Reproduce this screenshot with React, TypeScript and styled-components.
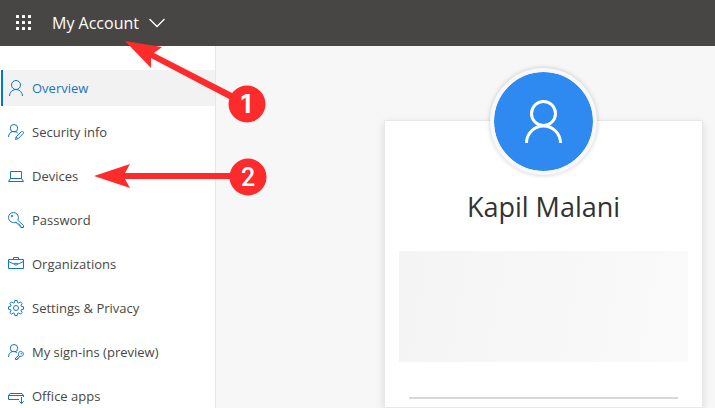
import React from "react";
import styled, { createGlobalStyle } from "styled-components";

const GlobalStyle = createGlobalStyle`
  * { box-sizing: border-box; }
  body {
    margin: 0;
    font-family: "Segoe UI", "Open Sans", "Noto Sans", sans-serif;
    color: #323130;
    background: #f7f7f7;
  }
`;

const Shell = styled.div`
  position: relative;
  display: flex;
  flex-direction: column;
  height: 100vh;
  overflow: hidden;
`;

const TopBar = styled.header`
  display: flex;
  flex: none;
  align-items: center;
  height: 46px;
  padding-left: 15px;
  gap: 20px;
  background: #484644;
`;

const BarButton = styled.button`
  display: flex;
  align-items: center;
  gap: 10px;
  padding: 0;
  border: 0;
  background: none;
  color: #fff;
  font-family: inherit;
  font-size: 16px;
  line-height: 24px;
  cursor: pointer;
`;

const Body = styled.div`
  display: flex;
  flex: 1;
  min-height: 0;
`;

const Sidebar = styled.nav`
  flex: none;
  width: 216px;
  padding-top: 24px;
  border-right: 1px solid #e6e6e6;
  background: #fff;
  overflow: hidden;
`;

const NavList = styled.ul`
  display: flex;
  flex-direction: column;
  gap: 8px;
  margin: 0;
  padding: 0 0 0 1px;
  list-style: none;
`;

const NavLink = styled.a<{ $active?: boolean }>`
  display: flex;
  align-items: center;
  gap: 8px;
  height: 36px;
  padding-left: 5px;
  border-left: 2px solid ${(p) => (p.$active ? "#0078d4" : "transparent")};
  background: ${(p) => (p.$active ? "#f3f2f2" : "transparent")};
  color: ${(p) => (p.$active ? "#1a75c0" : "#484746")};
  font-size: 13px;
  line-height: 20px;
  text-decoration: none;
  white-space: nowrap;
`;

const NavIcon = styled.svg`
  flex: none;
  width: 16px;
  height: 16px;
  fill: none;
  stroke: #1673c4;
`;

const Main = styled.main`
  flex: 1;
  min-width: 0;
  padding: 74px 12px 0 168px;
  background: #f7f7f7;
`;

const Card = styled.section`
  display: flex;
  flex-direction: column;
  align-items: center;
  height: 100%;
  padding: 0 14px;
  border: 1px solid #e8e8e8;
  background: #fff;
  box-shadow: 0 3px 8px rgba(0, 0, 0, 0.12);
`;

const Avatar = styled.div`
  display: flex;
  flex: none;
  align-items: center;
  justify-content: center;
  width: 107px;
  height: 107px;
  margin-top: -53px;
  border: 4px solid #f9f8f8;
  border-radius: 50%;
  background: #2e8af1;
  background-clip: padding-box;
  box-shadow: 0 0 5px rgba(0, 0, 0, 0.2);
`;

const Name = styled.h1`
  margin: 14px 0 0;
  font-size: 27px;
  font-weight: 400;
  line-height: 36px;
  white-space: nowrap;
`;

const Details = styled.div`
  flex: none;
  width: 100%;
  height: 111px;
  margin-top: 26px;
  background: linear-gradient(100deg, #f4f4f4, #f7f7f7 50%, #fafafa);
`;

const Divider = styled.hr`
  flex: none;
  align-self: stretch;
  height: 2px;
  margin: 35px 10px 0;
  border: 0;
  background: #d8d8d8;
`;

const Callouts = styled.svg`
  position: absolute;
  top: 0;
  left: 0;
  width: 280px;
  height: 200px;
  pointer-events: none;
  fill: #fd2b2b;
`;

const CalloutNumber = styled.text<{ $bold?: boolean }>`
  fill: #fff;
  font-family: ${(p) => (p.$bold ? "Inter" : "Roboto")}, sans-serif;
  font-size: 25px;
  font-weight: ${(p) => (p.$bold ? 700 : 500)};
  text-anchor: middle;
`;

const items: { label: string; active?: boolean; icon: React.ReactNode }[] = [
  {
    label: "Overview",
    active: true,
    icon: (
      <>
        <circle cx="8" cy="5" r="4.5" />
        <path d="M1.5 16 A6.5 6.5 0 0 1 14.5 16" />
      </>
    ),
  },
  {
    label: "Security info",
    icon: (
      <>
        <circle cx="6" cy="4.2" r="3.7" />
        <path d="M.5 13 C.8 6.5 7.5 6.5 9.8 9.2" />
        <path d="M7.5 15.5 L8.2 12.8 L13.4 7.6 Q14.5 7 15.3 7.9 Q16 8.8 15.2 9.6 L10.1 14.7 Z M8.3 12.8 L10 14.6" />
      </>
    ),
  },
  {
    label: "Devices",
    icon: <path d="M2.5 10.5 V3.5 H13.5 V10.5 M2.5 10.5 H13.5 L15.5 13.5 H.5 L2.5 10.5" />,
  },
  {
    label: "Password",
    icon: (
      <>
        <path d="M9.8 8.2 L15.5 13.5 V15.5 H12.8 V13.8 H11.2 V12 H9.4 L8.2 10.1 C4.5 11.7 .5 9.2 .5 5.4 C.5 2.7 2.7 .5 5.4 .5 C9.2 .5 11.5 4.6 9.8 8.2 Z" />
        <circle cx="4" cy="4" r="0.8" />
      </>
    ),
  },
  {
    label: "Organizations",
    icon: (
      <>
        <path d="M.5 3.5 H15.5 V12.5 H.5 Z M5.5 3.5 V1.5 H10.5 V3.5" />
        <path d="M.5 5.5 L6 8 M10 8 L15.5 5.5 M6 8 Q8 6.3 10 8 Q8 10.7 6 8 Z" />
      </>
    ),
  },
  {
    label: "Settings & Privacy",
    icon: (
      <>
        <path d="M6.8 .5 H9.2 L9.5 2.5 L10.8 3 L12.5 1.9 L14.1 3.5 L13 5.2 L13.5 6.5 L15.5 6.8 V9.2 L13.5 9.5 L13 10.8 L14.1 12.5 L12.5 14.1 L10.8 13 L9.5 13.5 L9.2 15.5 H6.8 L6.5 13.5 L5.2 13 L3.5 14.1 L1.9 12.5 L3 10.8 L2.5 9.5 L.5 9.2 V6.8 L2.5 6.5 L3 5.2 L1.9 3.5 L3.5 1.9 L5.2 3 L6.5 2.5 Z" />
        <circle cx="8" cy="8" r="2.5" />
      </>
    ),
  },
  {
    label: "My sign-ins (preview)",
    icon: (
      <>
        <circle cx="6" cy="4.2" r="3.7" />
        <path d="M.5 13 C.8 6.5 7 6.5 9 8.8" />
        <path d="M11 11.2 C9.5 8.5 11.6 7.3 12.8 7.5 C15.4 7.7 16.2 10.5 14.5 11.8 Q13.2 12.7 12 12.2 L10.8 13.2 V14.3 H9.5 V15.5 H7.5 V14 Z" />
        <circle cx="13.4" cy="9.7" r="0.4" />
      </>
    ),
  },
  {
    label: "Office apps",
    icon: (
      <>
        <path d="M11 11.5 H.5 V7.5 L2 5.5 H14 L15.5 7.5 V9 M.5 7.5 H15.5" />
        <path d="M13.5 9 V15.5 M11.2 13.3 L13.5 15.5 L15.8 13.3" />
      </>
    ),
  },
];

const waffle = [0, 1, 2].flatMap((row) => [0, 1, 2].map((col) => ({ row, col })));

export default function App() {
  return (
    <Shell>
      <GlobalStyle />
      <TopBar>
        <BarButton type="button" aria-label="App launcher">
          <svg width="17" height="16" fill="#fff">
            {waffle.map(({ row, col }) => (
              <rect key={`${row}-${col}`} x={1 + col * 6} y={row * 6} width="3" height="3" rx="0.5" />
            ))}
          </svg>
        </BarButton>
        <BarButton type="button">
          My Account
          <svg width="16" height="10" fill="none" stroke="#fff" strokeWidth="1.3">
            <path d="M.5 1 L8 8.5 L15.5 1" />
          </svg>
        </BarButton>
      </TopBar>
      <Body>
        <Sidebar aria-label="Account">
          <NavList>
            {items.map((item) => (
              <li key={item.label}>
                <NavLink href="#" $active={item.active} aria-current={item.active ? "page" : undefined}>
                  <NavIcon viewBox="0 0 16 16" aria-hidden="true">{item.icon}</NavIcon>
                  {item.label}
                </NavLink>
              </li>
            ))}
          </NavList>
        </Sidebar>
        <Main>
          <Card>
            <Avatar>
              <svg width="39" height="43" viewBox="0 0 39 43" fill="none" stroke="#fff" strokeWidth="3">
                <circle cx="19.5" cy="13.5" r="12" />
                <path d="M2.5 43 A17 17 0 0 1 36.5 43" />
              </svg>
            </Avatar>
            <Name>Kapil Malani</Name>
            <Details />
            <Divider />
          </Card>
        </Main>
      </Body>
      <Callouts viewBox="0 0 280 200">
        <path d="M125 41 L162 47 L154 53 L234 94 L231 100 L151 58 L151 68 Z" />
        <circle cx="247" cy="104" r="18.5" />
        <CalloutNumber $bold x="246" y="113">1</CalloutNumber>
        <path d="M94 176 L130 164 L125 173 H232 V179 H125 L130 188 Z" />
        <circle cx="248" cy="177" r="18.5" />
        <CalloutNumber x="248" y="186">2</CalloutNumber>
      </Callouts>
    </Shell>
  );
}
